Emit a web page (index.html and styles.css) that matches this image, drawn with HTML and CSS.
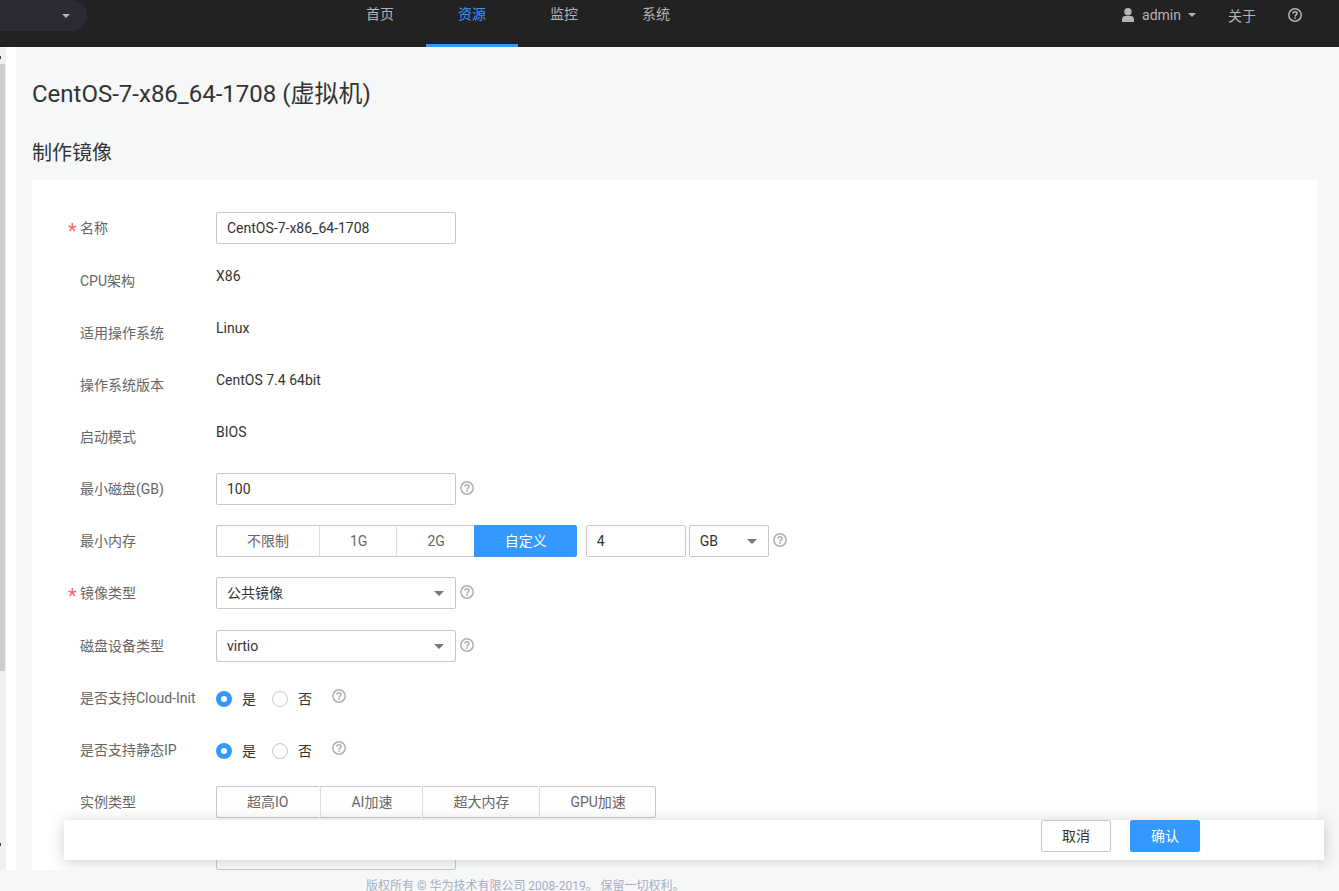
FILE: index.html
```html
<!DOCTYPE html>
<html lang="zh-CN">
<head>
<meta charset="utf-8">
<title>制作镜像</title>
<link rel="stylesheet" href="styles.css">
</head>
<body>
<svg class="sprite" aria-hidden="true">
  <symbol id="help" viewBox="0 0 14 14">
    <circle cx="7" cy="7" r="6.2" fill="none" stroke="currentColor" stroke-width="1.5"/>
    <path d="M4.9 5.6C5 4.3 5.9 3.8 7 3.8c1.2 0 2.1.7 2.1 1.7 0 1.4-2 1.4-2 2.9" fill="none" stroke="currentColor" stroke-width="1.6"/>
    <path d="M6.2 9.2h1.7v1.6H6.2z" fill="currentColor"/>
  </symbol>
  <symbol id="caret" viewBox="0 0 10 5">
    <path d="M0 0h10L5 5z" fill="currentColor"/>
  </symbol>
  <symbol id="user" viewBox="0 0 14 14">
    <circle cx="7" cy="3.8" r="3.7" fill="currentColor"/>
    <path d="M1 14V11.2C1 9.2 2.2 8.2 3.8 8h6.4c1.6.2 2.8 1.2 2.8 3.2V14z" fill="currentColor"/>
  </symbol>
</svg>

<header class="topbar">
  <button class="region" type="button" aria-label="切换区域"><svg class="caret-small"><use href="#caret"/></svg></button>
  <nav class="nav">
    <a href="#">首页</a>
    <a href="#" class="active">资源</a>
    <a href="#">监控</a>
    <a href="#">系统</a>
  </nav>
  <div class="tools">
    <button class="account" type="button"><svg class="icon"><use href="#user"/></svg>admin<svg class="caret-small"><use href="#caret"/></svg></button>
    <a href="#" class="about">关于</a>
    <a href="#" class="top-help" aria-label="帮助"><svg class="icon"><use href="#help"/></svg></a>
  </div>
</header>

<div class="body">
  <div class="scrollbar" aria-hidden="true">
    <span class="scroll-arrow"></span>
    <span class="scroll-thumb"></span>
    <span class="scroll-rest"></span>
    <span class="scroll-arrow"></span>
  </div>
  <div class="side"></div>
  <main class="main">
    <h1>CentOS-7-x86_64-1708 (虚拟机)</h1>
    <h2>制作镜像</h2>
    <form class="panel" id="image-form">
      <div class="row required">
        <label class="label" for="name"><span class="star">*</span>名称</label>
        <input class="field wide" id="name" type="text" value="CentOS-7-x86_64-1708">
      </div>
      <div class="row"><span class="label">CPU架构</span><span class="value">X86</span></div>
      <div class="row"><span class="label">适用操作系统</span><span class="value">Linux</span></div>
      <div class="row"><span class="label">操作系统版本</span><span class="value">CentOS 7.4 64bit</span></div>
      <div class="row"><span class="label">启动模式</span><span class="value">BIOS</span></div>
      <div class="row">
        <label class="label" for="disk">最小磁盘(GB)</label>
        <input class="field wide" id="disk" type="text" value="100">
        <span class="help"><svg class="icon"><use href="#help"/></svg></span>
      </div>
      <div class="row">
        <label class="label" for="memory">最小内存</label>
        <div class="segments joined">
          <button type="button">不限制</button><button type="button">1G</button><button type="button">2G</button><button type="button" class="on">自定义</button>
        </div>
        <input class="field amount" id="memory" type="text" value="4">
        <span class="select unit"><select aria-label="内存单位"><option>GB</option></select><svg><use href="#caret"/></svg></span>
        <span class="help"><svg class="icon"><use href="#help"/></svg></span>
      </div>
      <div class="row required">
        <label class="label" for="kind"><span class="star">*</span>镜像类型</label>
        <span class="select wide"><select id="kind"><option>公共镜像</option></select><svg><use href="#caret"/></svg></span>
        <span class="help"><svg class="icon"><use href="#help"/></svg></span>
      </div>
      <div class="row">
        <label class="label" for="device">磁盘设备类型</label>
        <span class="select wide"><select id="device"><option>virtio</option></select><svg><use href="#caret"/></svg></span>
        <span class="help"><svg class="icon"><use href="#help"/></svg></span>
      </div>
      <div class="row">
        <span class="label">是否支持Cloud-Init</span>
        <div class="radios">
          <label><input type="radio" name="cloud" checked>是</label>
          <label><input type="radio" name="cloud">否</label>
          <span class="help"><svg class="icon"><use href="#help"/></svg></span>
        </div>
      </div>
      <div class="row">
        <span class="label">是否支持静态IP</span>
        <div class="radios">
          <label><input type="radio" name="ip" checked>是</label>
          <label><input type="radio" name="ip">否</label>
          <span class="help"><svg class="icon"><use href="#help"/></svg></span>
        </div>
      </div>
      <div class="row">
        <span class="label">实例类型</span>
        <div class="segments spaced">
          <button type="button">超高IO</button><button type="button">AI加速</button><button type="button">超大内存</button><button type="button">GPU加速</button>
        </div>
      </div>
      <div class="row">
        <span class="label"></span>
        <input class="field wide" type="text" aria-label="描述">
      </div>
    </form>
    <div class="actions">
      <button type="button">取消</button>
      <button type="submit" form="image-form" class="primary">确认</button>
    </div>
  </main>
</div>
<footer class="footer">版权所有 © 华为技术有限公司 2008-2019。 保留一切权利。</footer>
</body>
</html>
```
FILE: styles.css
```css
* { box-sizing: border-box; }

body {
  margin: 0;
  height: 100vh;
  display: flex;
  flex-direction: column;
  overflow: hidden;
  background: #f6f8f8;
  color: #333;
  font: 14px/22px Roboto, "Noto Sans CJK SC", sans-serif;
}

button, input, select { font: inherit; color: inherit; margin: 0; }
button { cursor: pointer; }
a { color: inherit; text-decoration: none; }

.sprite { position: absolute; width: 0; height: 0; }
.icon { display: block; width: 14px; height: 14px; }
.caret-small { display: block; width: 8px; height: 4px; }

.topbar {
  flex: none;
  height: 47px;
  display: flex;
  align-items: flex-start;
  background: #222;
  color: #b4b4b4;
}
.region {
  width: 87px;
  height: 31px;
  padding: 0 17px;
  display: flex;
  align-items: center;
  justify-content: flex-end;
  border: 0;
  border-radius: 0 16px 16px 0;
  background: #2b2b34;
}
.nav { display: flex; margin-left: 247px; }
.nav a {
  height: 47px;
  padding: 0 32px;
  line-height: 28px;
  border-bottom: 3px solid transparent;
}
.nav .active { color: #39f; border-color: #39f; }
.tools {
  margin-left: auto;
  padding-right: 37px;
  display: flex;
  gap: 32px;
  line-height: 32px;
}
.account {
  display: flex;
  align-items: center;
  gap: 7px;
  height: 29px;
  padding: 0;
  border: 0;
  background: none;
}
.top-help { padding-top: 8px; }

.body { flex: 1; min-height: 0; display: flex; }
.scrollbar {
  width: 6px;
  display: flex;
  flex-direction: column;
  background: #f0f0f0;
}
.scroll-arrow { height: 17px; padding-top: 4px; display: flex; align-items: center; }
.scroll-arrow::before { content: ""; width: 1px; height: 3px; background: #444; }
.scroll-arrow:last-child { height: 52px; padding-top: 0; }
.scroll-thumb { flex: 607; width: 5px; background: #cdcdcd; }
.scroll-rest { flex: 147; }
.side { width: 10px; background: #fff; }

.main {
  position: relative;
  flex: 1;
  min-width: 0;
  overflow: hidden;
  padding: 31px 22px 0 16px;
}
h1, h2 { margin: 0; font-weight: 400; }
h1 { font-size: 24px; line-height: 32px; }
h2 { margin-top: 28px; font-size: 20px; line-height: 30px; }

.panel {
  margin-top: 12px;
  padding: 32px 36px;
  display: flex;
  flex-direction: column;
  gap: 20px;
  background: #fff;
}
.row { display: flex; align-items: flex-start; height: 32px; }
.row.required { height: 33px; }
.label {
  position: relative;
  flex: none;
  width: 148px;
  padding-left: 12px;
  line-height: 32px;
  color: #666;
}
.star {
  position: absolute;
  left: 0;
  top: 3px;
  font-size: 20px;
  color: #f66;
}
.field, .select select {
  width: 100%;
  height: 32px;
  padding: 0 10px;
  border: 1px solid #c8c8c8;
  border-radius: 2px;
  background: #fff;
  outline: 0;
}
.select { position: relative; }
.select select { appearance: none; }
.select svg {
  position: absolute;
  right: 12px;
  top: 14px;
  width: 10px;
  height: 5px;
  color: #777;
  pointer-events: none;
}
.wide, .field.wide { width: 240px; }
.field.amount { width: 100px; margin: 0 3px 0 9px; }
.unit { width: 80px; }
.help {
  height: 30px;
  margin-left: 4px;
  display: flex;
  align-items: center;
  color: #b0b0b0;
}

.segments { display: flex; }
.segments button {
  height: 32px;
  padding: 0 30px;
  border: 1px solid #c8c8c8;
  border-right: 0;
  background: #fff;
  color: #666;
}
.segments button + button { border-left-color: #ddd; }
.segments button:first-child { border-radius: 2px 0 0 2px; }
.segments button:last-child { border-right: 1px solid #c8c8c8; border-radius: 0 2px 2px 0; }
.segments.joined button + button { padding: 0 29px 0 30px; }
.segments.spaced { gap: 1px; }
.segments.spaced button { padding: 0 29px 0 30px; }
.segments.spaced button:first-child { padding: 0 31px 0 30px; }
.segments .on:last-child { background: #39f; border-color: #39f; color: #fff; }

.radios { display: flex; }
.radios label {
  height: 34px;
  margin-right: 16px;
  display: flex;
  align-items: center;
  gap: 10px;
}
.radios .help { height: 28px; }
.radios input {
  appearance: none;
  width: 16px;
  height: 16px;
  border: 1px solid #c8c8c8;
  border-radius: 50%;
  background: #fff;
}
.radios input:checked { border: 5px solid #39f; }

.actions {
  position: absolute;
  left: 48px;
  right: 15px;
  bottom: 10px;
  height: 40px;
  padding-right: 124px;
  display: flex;
  justify-content: flex-end;
  gap: 19px;
  background: #fff;
  box-shadow: 0 2px 15px rgba(0, 0, 0, .2);
}
.actions button {
  width: 70px;
  height: 32px;
  padding: 0;
  border: 1px solid #c8c8c8;
  border-radius: 2px;
  background: #fff;
}
.actions .primary { background: #39f; border-color: #39f; color: #fff; }

.footer {
  flex: none;
  height: 21px;
  padding: 7px 0 0 366px;
  font-size: 12px;
  line-height: 18px;
  color: #a6acc4;
}
```
